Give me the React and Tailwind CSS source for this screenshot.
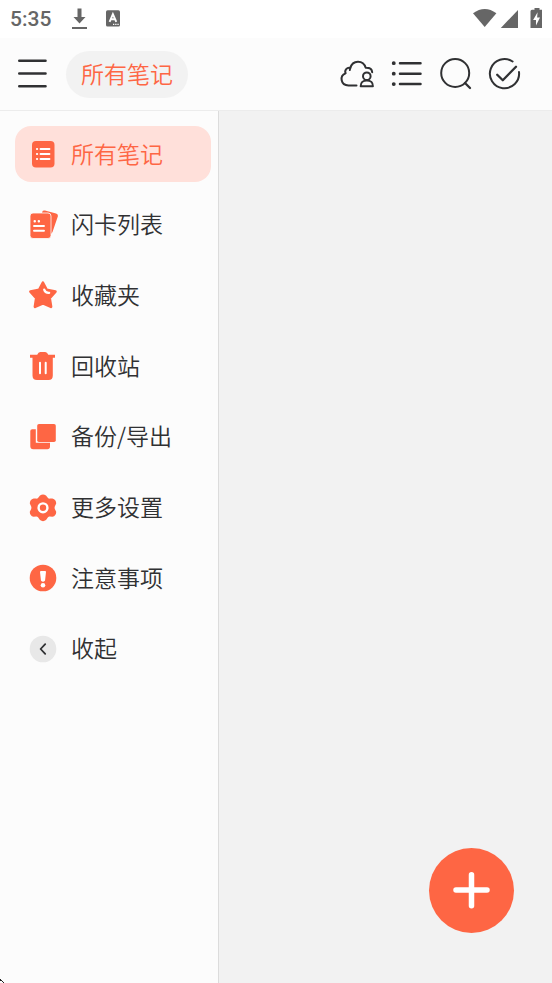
import React from "react";

const stroke = {
  fill: "none",
  stroke: "#303133",
  strokeWidth: 2,
  strokeLinecap: "round",
  strokeLinejoin: "round",
};

function NotesIcon() {
  return (
    <svg className="size-[30px] shrink-0" viewBox="0 0 30 30" aria-hidden="true">
      <rect x="4" y="2" width="22.5" height="26.5" rx="4" fill="#fe6644" />
      <path d="M12.5 10h9M12.5 15h9M12.5 20h9" stroke="#fff" strokeWidth="1.8" strokeLinecap="round" />
      <path d="M9 10h.1M9 15h.1M9 20h.1" stroke="#fff" strokeWidth="2.2" strokeLinecap="round" />
    </svg>
  );
}

function CardsIcon() {
  return (
    <svg className="size-[30px] shrink-0" viewBox="0 0 30 30" aria-hidden="true">
      <path d="M14.3 1.8Q14.8 0 17 .5L28 3.5Q30.4 4.2 29.8 6.5L24.5 22L23 24V6Q23 3.3 20 3.3H14Z" fill="#fe6644" />
      <rect x="2" y="3" width="21" height="25.5" rx="3" fill="#fe6644" stroke="#fcfcfc" strokeWidth="0.8" />
      <path d="M6.7 11.3h.1M10.8 11.3h.1" stroke="#fff" strokeWidth="2.4" strokeLinecap="round" />
      <path d="M6 16h10M6 20.8h10" stroke="#fff" strokeWidth="1.9" strokeLinecap="round" />
    </svg>
  );
}

function StarIcon() {
  return (
    <svg className="size-[30px] shrink-0" viewBox="0 0 30 30" aria-hidden="true">
      <path
        d="M14.9 2.8L18.6 10L27.4 11.6L21.6 18.2L23 26.8L15 23.2L7 26.8L8.3 18.2L2.5 11.6L11.2 10Z"
        fill="#fe6644"
        stroke="#fe6644"
        strokeWidth="2.8"
        strokeLinejoin="round"
      />
      <path d="M16.2 9.6C16.8 11.8 18.6 13 21.2 12.8" fill="none" stroke="#fff" strokeWidth="2.2" strokeLinecap="round" />
    </svg>
  );
}

function TrashIcon() {
  return (
    <svg className="size-[30px] shrink-0" viewBox="0 0 30 30" aria-hidden="true">
      <path d="M2 3.8H9.2Q10.3 1 12.3 1H17.2Q19.2 1 20.3 3.8H27V6.8H24.8V24.5Q24.8 29 20.5 29H9Q4.5 29 4.5 24.5V6.8H2Z" fill="#fe6644" />
      <path d="M12 11.8v10.4M17.7 11.8v10.4" stroke="#fff" strokeWidth="2" strokeLinecap="round" />
    </svg>
  );
}

function ExportIcon() {
  return (
    <svg className="size-[30px] shrink-0" viewBox="0 0 30 30" aria-hidden="true">
      <path d="M4.2 7.2H7.8V20.8H22V24.5Q22 27.2 19.3 27.2H5.3Q2.3 27.2 2.3 24.2V9Q2.3 7.2 4.2 7.2Z" fill="#fe6644" />
      <rect x="9.2" y="2" width="18.6" height="18" rx="1.8" fill="#fe6644" />
    </svg>
  );
}

function SettingsIcon() {
  return (
    <svg className="size-[30px] shrink-0" viewBox="0 0 30 30" aria-hidden="true">
      <path
        d="M12 2.6Q15 .4 18 2.6L20 5Q20.7 5.8 21.8 5.6L24.4 5.6Q28.3 6.8 28.2 10.6L26.8 13.5Q26.4 14.7 26.8 15.9L28.2 18.8Q28.3 22.8 24.4 23.8L21.8 23.6Q20.7 23.5 20 24.3L18 27Q15 29.3 12 27L10 24.3Q9.3 23.5 8.2 23.6L5.6 23.8Q1.7 22.8 1.8 18.8L3.2 15.9Q3.6 14.7 3.2 13.5L1.8 10.6Q1.7 6.8 5.6 5.6L8.2 5.6Q9.3 5.8 10 5Z"
        fill="#fe6644"
      />
      <circle cx="15" cy="14.8" r="4.4" fill="none" stroke="#fff" strokeWidth="2.4" />
    </svg>
  );
}

function NoticeIcon() {
  return (
    <svg className="size-[30px] shrink-0" viewBox="0 0 30 30" aria-hidden="true">
      <circle cx="15" cy="15" r="13.3" fill="#fe6644" />
      <path d="M13 9L13.9 17.1Q15 18.5 16.1 17.1L17 9Z" fill="#fff" stroke="#fff" strokeWidth="2" strokeLinejoin="round" />
      <circle cx="15" cy="22.3" r="2.3" fill="#fff" />
    </svg>
  );
}

function CollapseIcon() {
  return (
    <svg className="size-[30px] shrink-0" viewBox="0 0 30 30" aria-hidden="true">
      <circle cx="15" cy="15" r="13.3" fill="#e8e8e8" />
      <path d="M17.2 10.2L12.6 15L17.2 19.8" {...stroke} strokeWidth="1.8" />
    </svg>
  );
}

const items = [
  { label: "所有笔记", Icon: NotesIcon, active: true },
  { label: "闪卡列表", Icon: CardsIcon },
  { label: "收藏夹", Icon: StarIcon },
  { label: "回收站", Icon: TrashIcon },
  { label: "备份/导出", Icon: ExportIcon },
  { label: "更多设置", Icon: SettingsIcon },
  { label: "注意事项", Icon: NoticeIcon },
  { label: "收起", Icon: CollapseIcon },
];

function StatusBar() {
  return (
    <div className="flex h-[38px] shrink-0 items-center bg-white pl-[10px] text-[#666]">
      <span className="w-[60px] font-['Roboto',sans-serif] text-[21px] leading-[38px] font-medium">5:35</span>
      <svg className="h-[38px] w-[20px]" viewBox="0 0 20 38" fill="#666" aria-hidden="true">
        <path d="M7.5 8.5h4v8.5h4L9.5 23.5L3.5 17h4zM2 27h15v2H2z" />
      </svg>
      <svg className="ml-[14px] h-[38px] w-[20px]" viewBox="0 0 20 38" aria-hidden="true">
        <rect x="2" y="10.3" width="14" height="16.2" rx="1.6" fill="#666" />
        <path d="M5.6 21.8L8.9 14.2L12.3 21.8M7 19.3h4" fill="none" stroke="#fff" strokeWidth="1.9" />
        <path d="M9 24.4h1.3M11.2 24.4h1.3M13.4 24.4h1.3" stroke="#fff" strokeWidth="1.2" />
      </svg>
      <svg className="ml-auto h-[38px] w-[80px]" viewBox="0 0 80 38" fill="#666" aria-hidden="true">
        <path d="M1 13.3Q12.8 4.8 24.4 13.3L12.7 27Z" />
        <path d="M46 10V28H28.8Z" />
        <path d="M60 9.8H62.5V8H67.5V9.8H70V28H58.5V11.3Q58.5 9.8 60 9.8Z" />
        <path d="M65.6 12.3L61.1 20H64V25.5L68 17.4H65.1Z" fill="#fff" />
      </svg>
    </div>
  );
}

function Header() {
  return (
    <header className="flex h-[73px] shrink-0 items-center border-b border-[#ececec] bg-[#fcfcfc] pr-[30px] pl-[14px]">
      <button type="button" aria-label="菜单" className="size-9">
        <svg className="size-9" viewBox="0 0 36 36" aria-hidden="true">
          <path d="M5.3 4.8h26.2M5.3 17.5h26.2M5.3 30.3h26.2" {...stroke} strokeWidth="2.6" />
        </svg>
      </button>
      <button type="button" className="ml-4 h-[47px] rounded-full bg-[#f2f2f2] px-[15px] text-[23px] leading-8 text-[#fe6644]">
        <span className="block pb-[3px]">所有笔记</span>
      </button>
      <div className="ml-auto flex gap-[13px]">
        <button type="button" aria-label="云同步" className="size-9">
          <svg className="size-9" viewBox="0 0 36 36" aria-hidden="true">
            <path d="M17.5 29.5H9.5C1.6 29.3 .2 19.8 6.6 17.4C5.2 14 8 11.2 11.3 12C13.5 3.8 24.2 3.5 26.7 11.8C30 11.7 33 13 33.2 16.2" {...stroke} />
            <path d="M11.3 12C10.9 12.8 10.8 13.4 10.9 14" {...stroke} />
            <circle cx="27.8" cy="20.2" r="3.8" {...stroke} />
            <path d="M21.7 30.2C21.6 26.4 24 24.4 27.8 24.4C31.8 24.4 34 26.4 33.9 30.2Z" {...stroke} />
          </svg>
        </button>
        <button type="button" aria-label="列表" className="size-9">
          <svg className="size-9" viewBox="0 0 36 36" aria-hidden="true">
            <path d="M12 7.2h20.5M12 17.7h20.5M12 28.1h20.5" {...stroke} strokeWidth="2.5" />
            <path d="M5.7 7.2h.1M5.7 17.7h.1M5.7 28.1h.1" {...stroke} strokeWidth="3.8" />
          </svg>
        </button>
        <button type="button" aria-label="搜索" className="size-9">
          <svg className="size-9" viewBox="0 0 36 36" aria-hidden="true">
            <circle cx="18.2" cy="17" r="14" {...stroke} />
            <path d="M28 27L33 32" {...stroke} strokeWidth="2.3" />
          </svg>
        </button>
        <button type="button" aria-label="选择" className="size-9">
          <svg className="size-9" viewBox="0 0 36 36" aria-hidden="true">
            <path d="M26.6 5.5A14.6 14.6 0 1 0 33 16" {...stroke} />
            <path d="M11.2 18.7L16.8 24.2L30 10.8" {...stroke} strokeWidth="2.3" />
          </svg>
        </button>
      </div>
    </header>
  );
}

export default function App() {
  return (
    <div className="relative flex min-h-screen flex-col bg-[#f2f2f2] font-['Noto_Sans_CJK_SC',sans-serif] font-[350] text-[#303133]">
      <StatusBar />
      <Header />
      <div className="flex grow">
        <nav className="w-[219px] shrink-0 border-r border-[#dcdcdc] bg-[#fcfcfc] pt-[15px] pr-[7px] pl-[15px]">
          <ul className="flex h-[551px] flex-col justify-between">
            {items.map(({ label, Icon, active }) => (
              <li key={label}>
                <button
                  type="button"
                  aria-current={active ? "page" : undefined}
                  className={`flex h-14 w-full items-center gap-[13px] rounded-2xl pl-[13px] text-[23px] leading-8 ${
                    active ? "bg-[#ffe0da] text-[#fe6644]" : ""
                  }`}
                >
                  <Icon />
                  <span className="pb-[3px]">{label}</span>
                </button>
              </li>
            ))}
          </ul>
        </nav>
        <main className="grow" />
      </div>
      <button
        type="button"
        aria-label="新建笔记"
        className="absolute right-[38px] bottom-[50px] flex size-[85px] items-center justify-center rounded-full bg-[#fe6644]"
      >
        <svg className="size-[42px]" viewBox="0 0 42 42" aria-hidden="true">
          <path d="M20.5 4.8v31M5 20h31" stroke="#fff" strokeWidth="5.5" strokeLinecap="round" />
        </svg>
      </button>
      <svg className="absolute bottom-0 left-0 size-1" viewBox="0 0 4 4" shapeRendering="crispEdges" aria-hidden="true">
        <path d="M0 0h1v1h1v1H0ZM2 2h1v1H2ZM3 3h1v1H3Z" fill="#222" />
      </svg>
    </div>
  );
}
